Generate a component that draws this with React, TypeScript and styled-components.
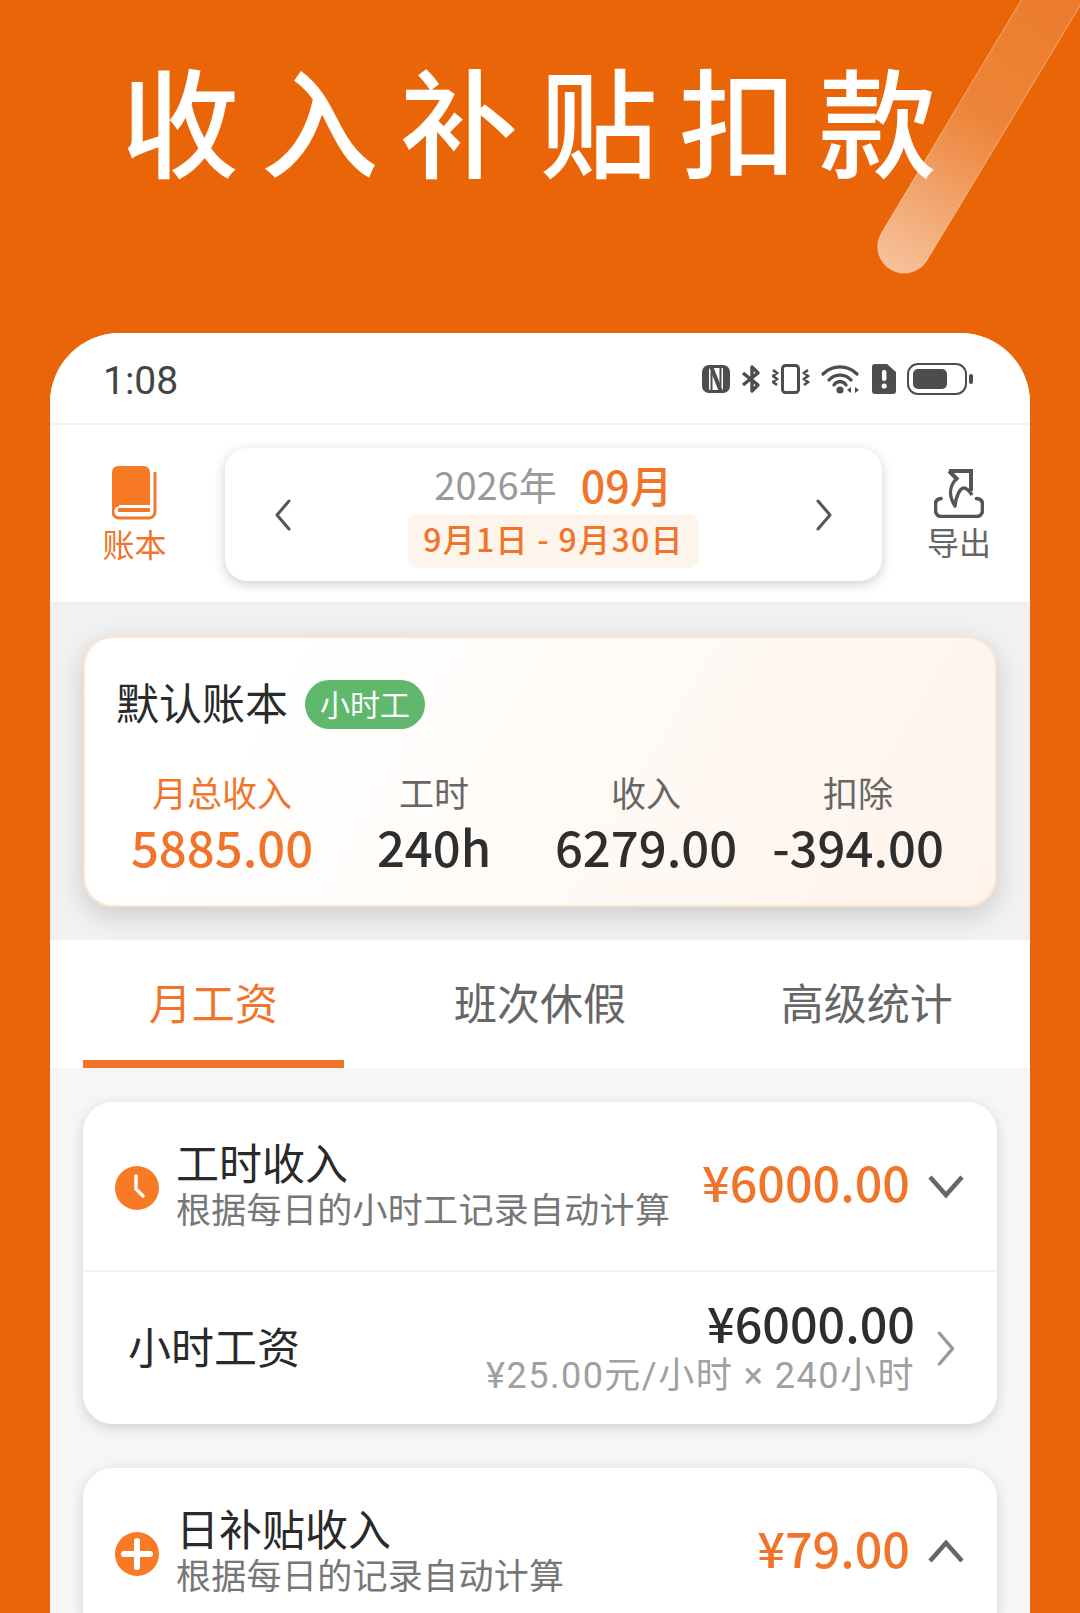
import styled, { createGlobalStyle } from "styled-components";

const ORANGE = "#f0752a";
const FONT = `"Noto Sans CJK SC", "Noto Sans", sans-serif`;

const GlobalStyle = createGlobalStyle`
  html, body {
    margin: 0;
    padding: 0;
    background: #e96507;
  }
  * {
    box-sizing: border-box;
  }
`;

const Page = styled("div")`
  position: relative;
  width: 1080px;
  height: 1613px;
  overflow: hidden;
  background: #e96507;
  font-family: ${FONT};
`;

const Banner = styled("div")`
  height: 333px;
  padding: 38px 0 0 121px;
`;

const BannerTitle = styled("h1")`
  margin: 0;
  font-size: 118px;
  line-height: 160px;
  font-weight: 500;
  letter-spacing: 21.5px;
  color: #fff;
  white-space: nowrap;
`;

const Streak = styled("svg")`
  position: absolute;
  top: 0;
  right: 0;
`;

const Phone = styled("div")`
  margin: 0 50px;
  height: 1280px;
  background: #f6f6f6;
  border-radius: 70px 70px 0 0;
  overflow: hidden;
`;

const StatusBar = styled("div")`
  height: 92px;
  padding: 6px 57px 0 53px;
  background: #fff;
  border-bottom: 2px solid #f1f1f1;
  display: flex;
  align-items: center;
  justify-content: space-between;
`;

const Clock = styled("span")`
  font-family: Roboto, sans-serif;
  font-size: 39px;
  color: #444;
`;

const StatusIcons = styled("div")`
  display: flex;
  align-items: center;
  gap: 11px;
  padding-bottom: 4px;
`;

const Toolbar = styled("div")`
  height: 179px;
  background: #fff;
  border-bottom: 2px solid #eeeeee;
  display: grid;
  grid-template-columns: 175px 657px 148px;
  align-items: center;
`;

const ToolItem = styled("div")<{ $color: string; $pad: string }>`
  display: flex;
  flex-direction: column;
  align-items: center;
  gap: 4px;
  padding: ${(p) => p.$pad};
  font-size: 32px;
  line-height: 38px;
  color: ${(p) => p.$color};
`;

const DateCard = styled("div")`
  height: 133px;
  margin-top: 2px;
  padding: 0 48px;
  background: #fff;
  border-radius: 22px;
  box-shadow: 0 3px 12px rgba(0, 0, 0, 0.2);
  display: flex;
  align-items: center;
  justify-content: space-between;
`;

const DateCenter = styled("div")`
  display: flex;
  flex-direction: column;
  align-items: center;
  padding-bottom: 3px;
`;

const MonthLine = styled("div")`
  display: flex;
  align-items: center;
  gap: 24px;
  height: 55px;
  padding-bottom: 5px;
`;

const Year = styled("span")`
  font-size: 38px;
  color: #999;
`;

const Month = styled("span")`
  font-size: 43px;
  font-weight: 500;
  color: ${ORANGE};
`;

const RangePill = styled("div")`
  width: 291px;
  height: 54px;
  border-radius: 10px;
  background: #fdf4ec;
  color: ${ORANGE};
  font-size: 32px;
  font-weight: 500;
  letter-spacing: 1.3px;
  line-height: 48px;
  text-align: center;
  white-space: nowrap;
`;

const SummaryArea = styled("div")`
  height: 336px;
  padding: 32px 33px 0;
  background: #f1f1f1;
`;

const SummaryCard = styled("div")`
  height: 271px;
  padding: 38px 31px 0;
  border: 2px solid #fae5d2;
  border-radius: 30px;
  background: linear-gradient(120deg, #ffffff 20%, #fff3ea 100%);
  box-shadow: 0 8px 26px rgba(0, 0, 0, 0.16);
`;

const SummaryHead = styled("div")`
  display: flex;
  align-items: flex-start;
  gap: 17px;
`;

const SummaryTitle = styled("span")`
  font-size: 43px;
  line-height: 50px;
  color: #2a2a2a;
`;

const Badge = styled("span")`
  width: 120px;
  height: 49px;
  margin-top: 4px;
  border-radius: 25px;
  background: #5fb86c;
  color: #fff;
  font-size: 30px;
  line-height: 47px;
  text-align: center;
`;

const StatGrid = styled("div")`
  display: grid;
  grid-template-columns: repeat(4, 212px);
  margin-top: 40px;
`;

const Stat = styled("div")<{ $accent?: boolean }>`
  display: flex;
  flex-direction: column;
  align-items: center;
  color: ${(p) => (p.$accent ? ORANGE : "#2e2e2e")};
`;

const StatLabel = styled("span")<{ $accent?: boolean }>`
  font-size: 35px;
  line-height: 46px;
  color: ${(p) => (p.$accent ? ORANGE : "#666")};
`;

const StatValue = styled("span")`
  font-size: 49px;
  font-weight: 500;
  line-height: 62px;
  white-space: nowrap;
`;

const Tabs = styled("div")`
  height: 128px;
  background: #fff;
  display: grid;
  grid-template-columns: repeat(3, 1fr);
`;

const Tab = styled("div")<{ $active?: boolean }>`
  position: relative;
  font-size: 43px;
  line-height: 122px;
  text-align: center;
  color: ${(p) => (p.$active ? ORANGE : "#666")};

  &::after {
    content: "";
    display: ${(p) => (p.$active ? "block" : "none")};
    position: absolute;
    left: 33px;
    bottom: 0;
    width: 261px;
    height: 8px;
    background: ${ORANGE};
  }
`;

const Sections = styled("div")`
  padding: 34px 33px 0;
  display: flex;
  flex-direction: column;
  gap: 44px;
`;

const SectionCard = styled("div")`
  background: #fff;
  border-radius: 30px;
  box-shadow: 0 4px 14px rgba(0, 0, 0, 0.15);
`;

const SectionHead = styled("div")`
  height: 170px;
  padding: 0 32px;
  display: flex;
  align-items: center;
  border-bottom: 2px solid #f4f4f4;
`;

const HeadIcon = styled("svg")`
  flex: none;
  margin-top: 3px;
`;

const HeadText = styled("div")`
  flex: 1;
  margin-left: 17px;
  padding-bottom: 4px;
  display: flex;
  flex-direction: column;
`;

const HeadTitle = styled("span")`
  font-size: 43px;
  line-height: 48px;
  color: #2a2a2a;
`;

const HeadSub = styled("span")`
  font-size: 35px;
  letter-spacing: 0.3px;
  line-height: 46px;
  color: #777;
  white-space: nowrap;
`;

const HeadAmount = styled("span")`
  padding-bottom: 10px;
  font-size: 48.5px;
  font-weight: 500;
  color: ${ORANGE};
  white-space: nowrap;
`;

const HeadChevron = styled("svg")`
  flex: none;
  margin-left: 17px;
`;

const ArrowMark = styled("svg")`
  flex: none;
`;

const DetailRow = styled("div")`
  height: 152px;
  padding: 0 40px 7px 45px;
  display: flex;
  align-items: center;
`;

const DetailName = styled("span")`
  flex: 1;
  font-size: 43px;
  color: #2a2a2a;
`;

const DetailValues = styled("div")`
  display: flex;
  flex-direction: column;
  align-items: flex-end;
  padding-top: 4px;
  margin-right: 20px;
`;

const DetailAmount = styled("span")`
  font-size: 48.5px;
  font-weight: 500;
  line-height: 58px;
  color: #2e2e2e;
`;

const DetailNote = styled("span")`
  font-family: Roboto, ${FONT};
  font-size: 36px;
  letter-spacing: 1.5px;
  line-height: 50px;
  color: #a0a0a0;
  white-space: nowrap;
`;

const DetailArrow = styled("div")`
  display: flex;
  padding-top: 8px;
`;

const NfcIcon = () => (
  <svg width="28" height="30" viewBox="0 0 28 30">
    <rect x="0" y="1" width="28" height="28" rx="7" fill="#4d4d4d" />
    <rect x="7" y="4" width="14" height="22" rx="1" fill="#fff" />
    <path d="M9 2.5L19 27.5" stroke="#4d4d4d" strokeWidth="4" />
    <path d="M9.5 8v18M18.5 4v18" stroke="#4d4d4d" strokeWidth="2" />
  </svg>
);

const BluetoothIcon = () => (
  <svg width="20" height="30" viewBox="0 0 20 30">
    <path d="M2 9l15 12-6 6V3l6 6L2 21" stroke="#4d4d4d" strokeWidth="3.4" fill="none" strokeLinejoin="round" />
  </svg>
);

const VibrateIcon = () => (
  <svg width="38" height="30" viewBox="0 0 38 30">
    <rect x="10.5" y="1.5" width="16" height="27" rx="3" stroke="#4d4d4d" strokeWidth="3" fill="none" />
    <path d="M1 6l4 3-4 3 4 3-4 3 4 3M36 6l-4 3 4 3-4 3 4 3-4 3" stroke="#4d4d4d" strokeWidth="2.6" fill="none" />
  </svg>
);

const WifiIcon = () => (
  <svg width="40" height="30" viewBox="0 0 40 30">
    <path d="M2 10a24 24 0 0 1 34 0M8 16a15 15 0 0 1 22 0M13 21a7 7 0 0 1 12 0" stroke="#4d4d4d" strokeWidth="3.2" fill="none" strokeLinecap="round" />
    <circle cx="19" cy="26" r="3.6" fill="#4d4d4d" />
    <path d="M30 23l-4 3 4 3zM34 23l4 3-4 3z" fill="#4d4d4d" />
  </svg>
);

const SimAlertIcon = () => (
  <svg width="24" height="30" viewBox="0 0 24 30">
    <path d="M3 0h12l9 8v19a3 3 0 0 1-3 3H3a3 3 0 0 1-3-3V3a3 3 0 0 1 3-3z" fill="#4d4d4d" />
    <rect x="10" y="6" width="4.4" height="11" rx="2" fill="#fff" />
    <circle cx="12.2" cy="22" r="2.6" fill="#fff" />
  </svg>
);

const BatteryIcon = () => (
  <svg width="66" height="32" viewBox="0 0 66 32">
    <rect x="1" y="1" width="58" height="30" rx="10" stroke="#4d4d4d" strokeWidth="2" fill="none" />
    <rect x="6" y="6" width="34" height="20" rx="5" fill="#4d4d4d" />
    <rect x="62" y="11" width="4" height="10" rx="2" fill="#4d4d4d" />
  </svg>
);

const BookIcon = () => (
  <svg width="46" height="54" viewBox="0 0 46 54">
    <path d="M6 0h26a6 6 0 0 1 6 6v33H8a8 8 0 0 0-8 3V6a6 6 0 0 1 6-6z" fill="#f97a24" />
    <path d="M43 6v40a6 6 0 0 1-6 6H7a6 6 0 0 1-6-6v-2a6 6 0 0 1 6-5" stroke="#f0782c" strokeWidth="3" fill="none" />
    <rect x="6" y="42" width="32" height="4" rx="1" fill="#f0782c" />
  </svg>
);

const ExportIcon = () => (
  <svg width="50" height="50" viewBox="0 0 50 50">
    <path d="M7 30.5C3 31 1.5 33 1.5 36v6c0 4 2.5 6.5 6 6.5h35c3.500 0 6-2.500 6-6.500v-6c0-3-1.500-5-6-5.500" stroke="#555" strokeWidth="3.6" fill="none" strokeLinecap="round" />
    <path d="M15 3H37V23M15 3l9 9" stroke="#555" strokeWidth="4" fill="none" />
    <path d="M22 11C15 19 15 29 21 38C22 28 26 20 30 20C33 20 36 24 38 27" stroke="#555" strokeWidth="3.4" fill="none" strokeLinejoin="round" />
  </svg>
);

const Chevron = ({ dir, size, color }: { dir: "left" | "right"; size: number; color: string }) => (
  <ArrowMark width={size} height={size * 1.6} viewBox="0 0 20 32">
    <path
      d={dir === "left" ? "M16 2 L4 16 L16 30" : "M4 2 L16 16 L4 30"}
      stroke={color}
      strokeWidth="3"
      fill="none"
      strokeLinecap="round"
      strokeLinejoin="round"
    />
  </ArrowMark>
);

const stats = [
  { label: "月总收入", value: "5885.00", accent: true },
  { label: "工时", value: "240h" },
  { label: "收入", value: "6279.00" },
  { label: "扣除", value: "-394.00" },
];

export default function App() {
  return (
    <Page>
      <GlobalStyle />
      <Banner>
        <BannerTitle>收入补贴扣款</BannerTitle>
      </Banner>
      <Streak width="220" height="290" viewBox="0 0 220 290">
        <defs>
          <linearGradient id="streak" x1="0" y1="0" x2="0" y2="1">
            <stop offset="0" stopColor="#fff" stopOpacity="0.14" />
            <stop offset="0.5" stopColor="#fff" stopOpacity="0.2" />
            <stop offset="1" stopColor="#fff" stopOpacity="0.6" />
          </linearGradient>
        </defs>
        <rect
          x="-26.5"
          y="-330"
          width="53"
          height="356"
          rx="26.5"
          fill="url(#streak)"
          stroke="#fff"
          strokeOpacity="0.35"
          strokeWidth="1"
          transform="translate(44 247) rotate(31)"
        />
      </Streak>
      <Phone>
        <StatusBar>
          <Clock>1:08</Clock>
          <StatusIcons>
            <NfcIcon />
            <BluetoothIcon />
            <VibrateIcon />
            <WifiIcon />
            <SimAlertIcon />
            <BatteryIcon />
          </StatusIcons>
        </StatusBar>
        <Toolbar>
          <ToolItem $color={ORANGE} $pad="0 6px 0 0">
            <BookIcon />
            账本
          </ToolItem>
          <DateCard>
            <Chevron dir="left" size={20} color="#555" />
            <DateCenter>
              <MonthLine>
                <Year>2026年</Year>
                <Month>09月</Month>
              </MonthLine>
              <RangePill>9月1日 - 9月30日</RangePill>
            </DateCenter>
            <Chevron dir="right" size={20} color="#555" />
          </DateCard>
          <ToolItem $color="#666" $pad="0 0 0 6px">
            <ExportIcon />
            导出
          </ToolItem>
        </Toolbar>
        <SummaryArea>
          <SummaryCard>
            <SummaryHead>
              <SummaryTitle>默认账本</SummaryTitle>
              <Badge>小时工</Badge>
            </SummaryHead>
            <StatGrid>
              {stats.map((item) => (
                <Stat key={item.label} $accent={item.accent}>
                  <StatLabel $accent={item.accent}>{item.label}</StatLabel>
                  <StatValue>{item.value}</StatValue>
                </Stat>
              ))}
            </StatGrid>
          </SummaryCard>
        </SummaryArea>
        <Tabs>
          <Tab $active>月工资</Tab>
          <Tab>班次休假</Tab>
          <Tab>高级统计</Tab>
        </Tabs>
        <Sections>
          <SectionCard>
            <SectionHead>
              <HeadIcon width="44" height="44" viewBox="0 0 44 44">
                <circle cx="22" cy="22" r="22" fill="#f97a24" />
                <path d="M21 10v13l7 7" stroke="#fff" strokeWidth="3.4" fill="none" strokeLinecap="round" />
              </HeadIcon>
              <HeadText>
                <HeadTitle>工时收入</HeadTitle>
                <HeadSub>根据每日的小时工记录自动计算</HeadSub>
              </HeadText>
              <HeadAmount>¥6000.00</HeadAmount>
              <HeadChevron width="38" height="26" viewBox="0 0 38 26">
                <path d="M3 4l16 18L35 4" stroke="#666" strokeWidth="4.500" fill="none" />
              </HeadChevron>
            </SectionHead>
            <DetailRow>
              <DetailName>小时工资</DetailName>
              <DetailValues>
                <DetailAmount>¥6000.00</DetailAmount>
                <DetailNote>¥25.00元/小时 × 240小时</DetailNote>
              </DetailValues>
              <DetailArrow>
                <Chevron dir="right" size={22} color="#999" />
              </DetailArrow>
            </DetailRow>
          </SectionCard>
          <SectionCard>
            <SectionHead>
              <HeadIcon width="44" height="44" viewBox="0 0 44 44">
                <circle cx="22" cy="22" r="22" fill="#f97a24" />
                <path d="M22 9v26M9 22h26" stroke="#fff" strokeWidth="6" strokeLinecap="round" />
              </HeadIcon>
              <HeadText>
                <HeadTitle>日补贴收入</HeadTitle>
                <HeadSub>根据每日的记录自动计算</HeadSub>
              </HeadText>
              <HeadAmount>¥79.00</HeadAmount>
              <HeadChevron width="38" height="26" viewBox="0 0 38 26">
                <path d="M3 22L19 4l16 18" stroke="#666" strokeWidth="4.500" fill="none" />
              </HeadChevron>
            </SectionHead>
          </SectionCard>
        </Sections>
      </Phone>
    </Page>
  );
}
